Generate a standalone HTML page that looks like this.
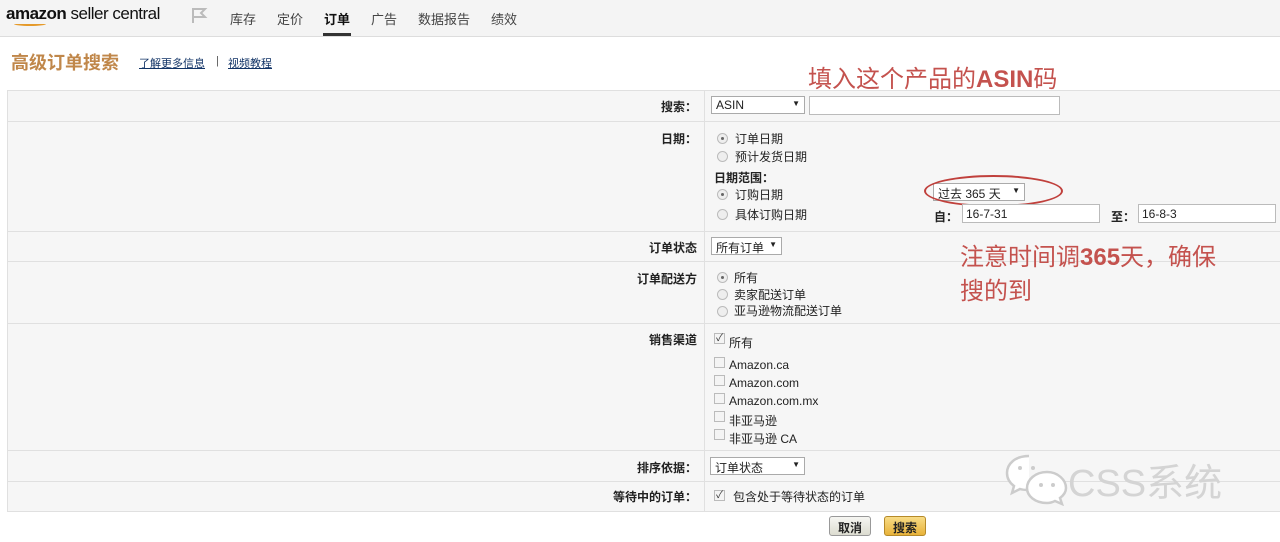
<!DOCTYPE html>
<html><head><meta charset="utf-8"><style>
*{margin:0;padding:0;box-sizing:border-box}
body{width:1280px;height:542px;background:#fff;position:relative;overflow:hidden;font-family:"Liberation Sans","Noto Sans CJK SC",sans-serif;font-size:12px;color:#222}
.a{position:absolute;white-space:nowrap}
.hdr{position:absolute;left:0;top:0;width:1280px;height:37px;background:#f4f4f4;border-bottom:1px solid #ddd}
.tab{position:absolute;top:9px;font-size:13px;color:#444}
.row{position:absolute;left:7px;width:1273px;background:#f6f6f6;border-top:1px solid #e0e0e0}
.lbl{position:absolute;right:583px;font-weight:bold;font-size:12px;color:#222}
.sel{position:absolute;height:18px;border:1px solid #aaa;background:#fff;font-size:12px;padding:1px 4px;color:#222}
.sel:after{content:"▼";position:absolute;right:4px;top:2px;font-size:8px}
.inp{position:absolute;height:19px;border:1px solid #bbb;background:#fff;font-size:12px;padding:2px 3px}
.rad{position:absolute;width:11px;height:11px;border-radius:50%;border:1px solid #bbb;background:#eee}
.rad.on:after{content:"";position:absolute;left:3px;top:3px;width:3px;height:3px;border-radius:50%;background:#666}
.cb{position:absolute;width:11px;height:11px;border:1px solid #bbb;background:#f4f4f4;font-size:10px;line-height:9px;text-align:center;color:#333}
.t{position:absolute;font-size:12px;color:#222}
.red{position:absolute;color:#c4524e;font-size:24px;white-space:nowrap}
.btn{position:absolute;top:516px;height:20px;border:1px solid #999;border-radius:3px;font-weight:bold;font-size:12px;padding:2px 8px}
</style></head><body>
<div class="hdr"></div>
<div class="a" style="left:6px;top:4px;font-size:17px;color:#111;letter-spacing:-0.5px"><b>amazon</b> seller central</div>
<div class="a" style="left:14px;top:22px;width:32px;height:4px;border-bottom:2px solid #e59a2a;border-radius:0 0 50% 50%"></div>
<svg class="a" style="left:190px;top:6px" width="18" height="18"><path d="M3 2V17M3 3H15L11 7L15 11H3" fill="none" stroke="#bbb" stroke-width="2"/></svg>
<div class="tab" style="left:230px">库存</div>
<div class="tab" style="left:277px">定价</div>
<div class="tab" style="left:324px;font-weight:bold;color:#111">订单</div>
<div class="a" style="left:323px;top:33px;width:28px;height:3px;background:#333"></div>
<div class="tab" style="left:371px">广告</div>
<div class="tab" style="left:418px">数据报告</div>
<div class="tab" style="left:491px">绩效</div>

<div class="a" style="left:11px;top:49px;font-size:18px;color:#c0874a;font-weight:bold">高级订单搜索</div>
<div class="a" style="left:139px;top:55px;font-size:11px;color:#136;text-decoration:underline">了解更多信息</div>
<div class="a" style="left:216px;top:55px;font-size:11px;color:#555">|</div>
<div class="a" style="left:228px;top:55px;font-size:11px;color:#136;text-decoration:underline">视频教程</div>
<div class="red" style="left:808px;top:59px">填入这个产品的<b>ASIN</b>码</div>

<div class="row" style="top:90px;height:31px"></div>
<div class="row" style="top:121px;height:110px"></div>
<div class="row" style="top:231px;height:30px"></div>
<div class="row" style="top:261px;height:62px"></div>
<div class="row" style="top:323px;height:127px"></div>
<div class="row" style="top:450px;height:31px"></div>
<div class="row" style="top:481px;height:31px;border-bottom:1px solid #e0e0e0"></div>
<div class="a" style="left:7px;top:90px;width:1px;height:422px;background:#e0e0e0"></div>
<div class="a" style="left:704px;top:90px;width:1px;height:422px;background:#e0e0e0"></div>

<div class="lbl" style="top:98px">搜索：</div>
<div class="sel" style="left:711px;top:96px;width:94px">ASIN</div>
<div class="inp" style="left:809px;top:96px;width:251px"></div>

<div class="lbl" style="top:130px">日期：</div>
<div class="rad on" style="left:717px;top:133px"></div><div class="t" style="left:735px;top:130px">订单日期</div>
<div class="rad" style="left:717px;top:151px"></div><div class="t" style="left:735px;top:148px">预计发货日期</div>
<div class="t" style="left:714px;top:169px;font-weight:bold">日期范围：</div>
<div class="rad on" style="left:717px;top:189px"></div><div class="t" style="left:735px;top:186px">订购日期</div>
<div class="rad" style="left:717px;top:209px"></div><div class="t" style="left:735px;top:206px">具体订购日期</div>
<div class="sel" style="left:933px;top:183px;width:92px">过去 365 天</div>
<div class="a" style="left:924px;top:175px;width:139px;height:32px;border:2px solid #c0403c;border-radius:50%"></div>
<div class="t" style="left:934px;top:208px;font-weight:bold">自：</div>
<div class="inp" style="left:962px;top:204px;width:138px">16-7-31</div>
<div class="t" style="left:1111px;top:208px;font-weight:bold">至：</div>
<div class="inp" style="left:1138px;top:204px;width:138px">16-8-3</div>

<div class="lbl" style="top:239px">订单状态</div>
<div class="sel" style="left:711px;top:237px;width:71px">所有订单</div>
<div class="red" style="left:960px;top:237px">注意时间调<b>365</b>天，确保</div>
<div class="red" style="left:960px;top:271px">搜的到</div>

<div class="lbl" style="top:270px">订单配送方</div>
<div class="rad on" style="left:717px;top:272px"></div><div class="t" style="left:734px;top:269px">所有</div>
<div class="rad" style="left:717px;top:289px"></div><div class="t" style="left:734px;top:286px">卖家配送订单</div>
<div class="rad" style="left:717px;top:306px"></div><div class="t" style="left:734px;top:302px">亚马逊物流配送订单</div>

<div class="lbl" style="top:331px">销售渠道</div>
<div class="cb" style="left:714px;top:333px">✓</div><div class="t" style="left:729px;top:334px">所有</div>
<div class="cb" style="left:714px;top:357px"></div><div class="t" style="left:729px;top:358px">Amazon.ca</div>
<div class="cb" style="left:714px;top:375px"></div><div class="t" style="left:729px;top:376px">Amazon.com</div>
<div class="cb" style="left:714px;top:393px"></div><div class="t" style="left:729px;top:394px">Amazon.com.mx</div>
<div class="cb" style="left:714px;top:411px"></div><div class="t" style="left:729px;top:412px">非亚马逊</div>
<div class="cb" style="left:714px;top:429px"></div><div class="t" style="left:729px;top:430px">非亚马逊 CA</div>

<div class="lbl" style="top:459px">排序依据：</div>
<div class="sel" style="left:710px;top:457px;width:95px">订单状态</div>
<svg class="a" style="left:1003px;top:452px" width="66" height="54"><path d="M26 4C12 4 4 12 4 21C4 27 7 31 11 34L9 41L17 37C20 38 23 38 26 38" fill="#fff" stroke="#ccc" stroke-width="2.5"/><path d="M44 20C32 20 24 28 24 36C24 44 32 51 44 51C47 51 50 50 52 49L59 52L57 46C61 43 63 40 63 36C63 28 55 20 44 20Z" fill="#fff" stroke="#ccc" stroke-width="2.5"/><circle cx="17" cy="16" r="2" fill="#ccc"/><circle cx="30" cy="16" r="2" fill="#ccc"/><circle cx="38" cy="33" r="2" fill="#ccc"/><circle cx="50" cy="33" r="2" fill="#ccc"/></svg>
<div class="a" style="left:1068px;top:452px;font-size:38px;color:#d4d4d4;font-family:'Liberation Sans','Noto Sans CJK SC',sans-serif">CSS系统</div>

<div class="lbl" style="top:488px">等待中的订单：</div>
<div class="cb" style="left:714px;top:490px">✓</div><div class="t" style="left:733px;top:488px">包含处于等待状态的订单</div>

<div class="btn" style="left:829px;background:linear-gradient(#f6f6f2,#dcdcd0)">取消</div>
<div class="btn" style="left:884px;background:linear-gradient(#f8dc86,#e8b23a);border-color:#b58a2a">搜索</div>
</body></html>
